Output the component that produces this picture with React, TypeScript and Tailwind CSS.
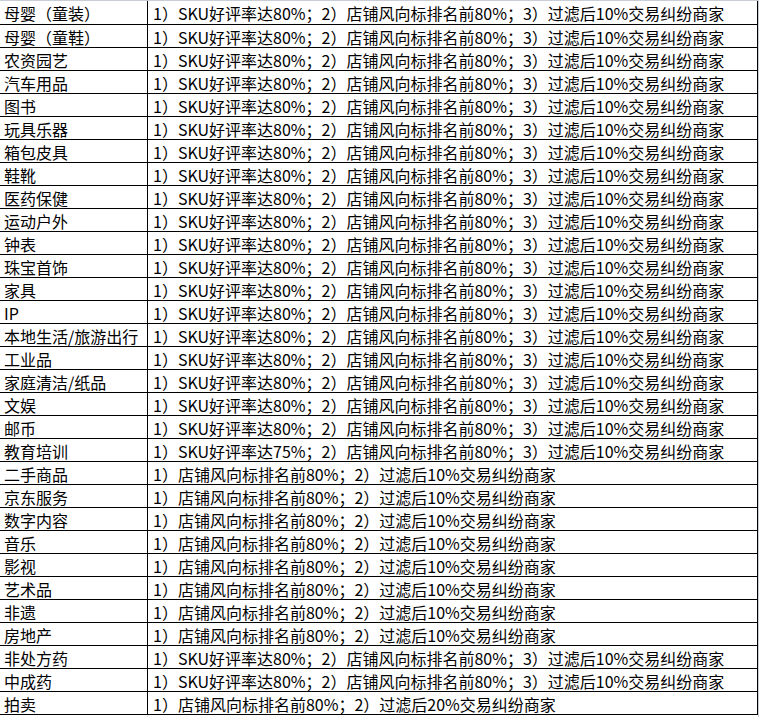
import React from "react";

const A = "1）SKU好评率达80%；2）店铺风向标排名前80%；3）过滤后10%交易纠纷商家";
const B = "1）SKU好评率达75%；2）店铺风向标排名前80%；3）过滤后10%交易纠纷商家";
const C = "1）店铺风向标排名前80%；2）过滤后10%交易纠纷商家";
const D = "1）店铺风向标排名前80%；2）过滤后20%交易纠纷商家";

const rows: [string, string][] = [
  ["母婴（童装）", A],
  ["母婴（童鞋）", A],
  ["农资园艺", A],
  ["汽车用品", A],
  ["图书", A],
  ["玩具乐器", A],
  ["箱包皮具", A],
  ["鞋靴", A],
  ["医药保健", A],
  ["运动户外", A],
  ["钟表", A],
  ["珠宝首饰", A],
  ["家具", A],
  ["IP", A],
  ["本地生活/旅游出行", A],
  ["工业品", A],
  ["家庭清洁/纸品", A],
  ["文娱", A],
  ["邮币", A],
  ["教育培训", B],
  ["二手商品", C],
  ["京东服务", C],
  ["数字内容", C],
  ["音乐", C],
  ["影视", C],
  ["艺术品", C],
  ["非遗", C],
  ["房地产", C],
  ["非处方药", A],
  ["中成药", A],
  ["拍卖", D],
];

export default function App() {
  return (
    <div
      className="w-[759px] h-[717px] bg-white overflow-hidden text-black"
      style={{ fontFamily: '"Microsoft YaHei", "Noto Sans CJK SC", "Noto Sans", sans-serif' }}
    >
      <div className="flex">
        <div className="w-[758px] border-t border-[#c9ced6]">
          {rows.map(([k, v], i) => (
            <div
              key={i}
              className={`flex border-b border-black ${i === 0 ? "h-[24px]" : "h-[23px]"}`}
            >
              <div className="w-[148px] shrink-0 border-r border-black pl-[4px] pt-[1px] flex items-center text-[16px] leading-none whitespace-nowrap">
                {k}
              </div>
              <div className="w-[610px] shrink-0 border-r border-black pl-[5px] pt-[1px] flex items-center text-[16px] leading-none whitespace-nowrap">
                {v}
              </div>
            </div>
          ))}
          <div className="flex h-[10px]">
            <div className="w-[148px] border-r border-[#e3e3e3]" />
          </div>
        </div>
        <div className="w-px h-[717px] bg-[#c9ced6]" />
      </div>
    </div>
  );
}
